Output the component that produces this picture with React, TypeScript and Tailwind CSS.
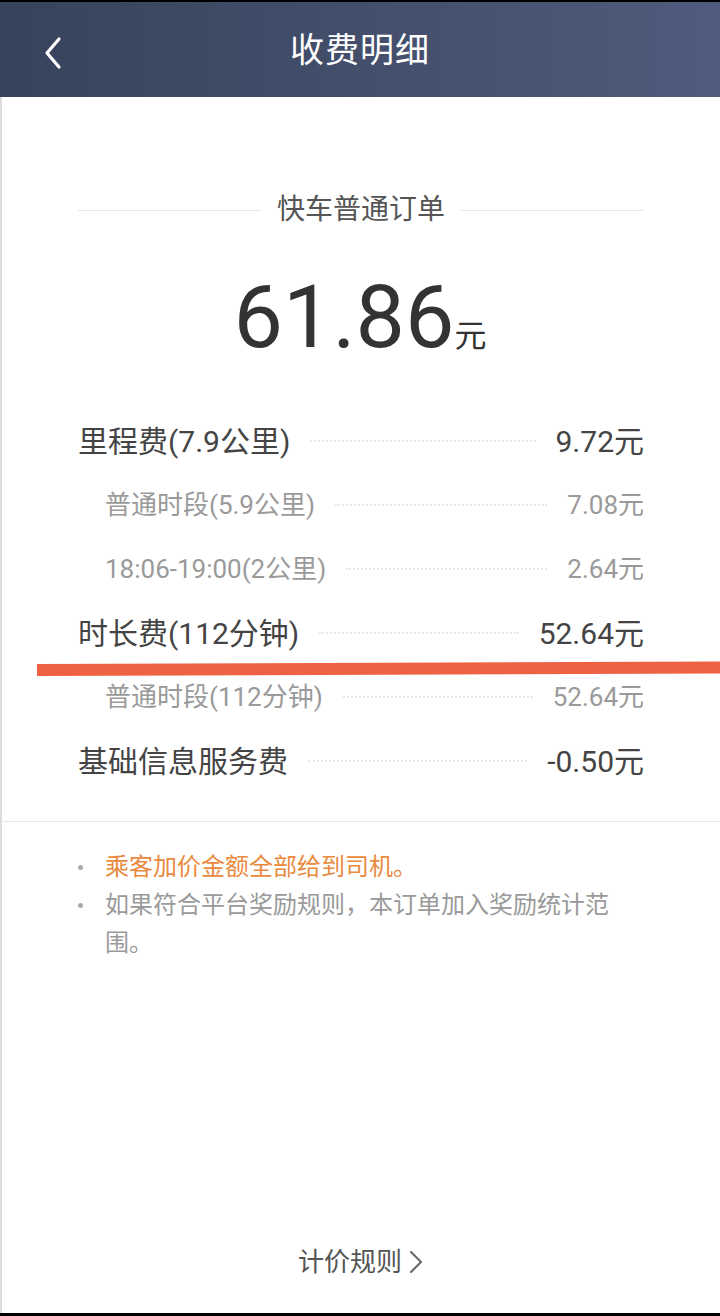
import React from 'react';

type Row = { label: string; value: string; sub?: boolean };

const rows: Row[] = [
  { label: '里程费(7.9公里)', value: '9.72元' },
  { label: '普通时段(5.9公里)', value: '7.08元', sub: true },
  { label: '18:06-19:00(2公里)', value: '2.64元', sub: true },
  { label: '时长费(112分钟)', value: '52.64元' },
  { label: '普通时段(112分钟)', value: '52.64元', sub: true },
  { label: '基础信息服务费', value: '-0.50元' },
];

const App: React.FC = () => {
  return (
    <div className="relative flex flex-col w-[720px] h-[1316px] bg-white overflow-hidden font-['Roboto','Noto_Sans_CJK_SC',sans-serif]">
      {/* Header */}
      <header className="relative flex items-center justify-center h-[97px] shrink-0 border-t-2 border-black bg-gradient-to-r from-[#37425b] to-[#505b7d]">
        <button className="absolute left-[38px] top-[30px] p-1">
          <svg width="24" height="34" viewBox="0 0 24 34" fill="none">
            <polyline points="17,3 5,17 17,31" stroke="white" strokeWidth="3.2" strokeLinecap="round" strokeLinejoin="round" />
          </svg>
        </button>
        <h1 className="text-white text-[34px] leading-none tracking-[1px]">收费明细</h1>
      </header>

      <div className="flex-1 flex flex-col border-l-2 border-[#dcdcdc]">
        {/* Order type */}
        <div className="flex items-center gap-4 px-[76px] mt-[93px]">
          <div className="flex-1 h-px bg-[#e6e6e6]" />
          <span className="text-[28px] leading-[40px] text-[#555]">快车普通订单</span>
          <div className="flex-1 h-px bg-[#e6e6e6]" />
        </div>

        {/* Total */}
        <div className="flex items-baseline justify-center mt-[43px] text-[#333] pr-[2px]">
          <span className="text-[88px] leading-none">61.86</span>
          <span className="text-[32px] leading-none">元</span>
        </div>

        {/* Fee rows */}
        <div className="flex flex-col px-[76px] mt-[48px]">
          {rows.map((r, i) => (
            <div key={i} className="flex items-center h-16">
              <span
                className={
                  r.sub
                    ? 'pl-[27px] text-[26px] text-[#9a9a9a]'
                    : 'text-[30px] text-[#444]'
                }
              >
                {r.label}
              </span>
              <div className="flex-1 mx-5 border-t-2 border-dotted border-[#e8e8e8]" />
              <span className={r.sub ? 'text-[26px] text-[#9a9a9a]' : 'text-[30px] text-[#444]'}>
                {r.value}
              </span>
            </div>
          ))}
        </div>

        <div className="h-px bg-[#e6e6e6] mt-[28px]" />

        {/* Notes */}
        <ul className="flex flex-col pl-[76px] pr-[94px] pt-[26px] text-[24px] leading-[38px]">
          <li className="flex items-start">
            <span className="w-[27px] shrink-0 flex h-[38px] items-center">
              <span className="w-[5px] h-[5px] rounded-full bg-[#aaa]" />
            </span>
            <span className="text-[#e98a3f]">乘客加价金额全部给到司机。</span>
          </li>
          <li className="flex items-start">
            <span className="w-[27px] shrink-0 flex h-[38px] items-center">
              <span className="w-[5px] h-[5px] rounded-full bg-[#aaa]" />
            </span>
            <span className="text-[#9a9a9a]">如果符合平台奖励规则，本订单加入奖励统计范围。</span>
          </li>
        </ul>

        {/* Footer link */}
        <div className="mt-auto flex items-center justify-center pb-[31px]">
          <span className="text-[26px] leading-[40px] text-[#555]">计价规则</span>
          <svg width="16" height="26" viewBox="0 0 16 26" fill="none" className="ml-[6px]">
            <polyline points="3,3 13,13 3,23" stroke="#666" strokeWidth="2" strokeLinecap="round" strokeLinejoin="round" />
          </svg>
        </div>
      </div>

      <div className="h-[3px] bg-black shrink-0" />

      {/* Annotation stroke */}
      <div className="absolute left-[37px] top-[664px] w-[690px] h-[12px] bg-[#ef6143] origin-left -rotate-[0.2deg]" />
    </div>
  );
};

export default App;
